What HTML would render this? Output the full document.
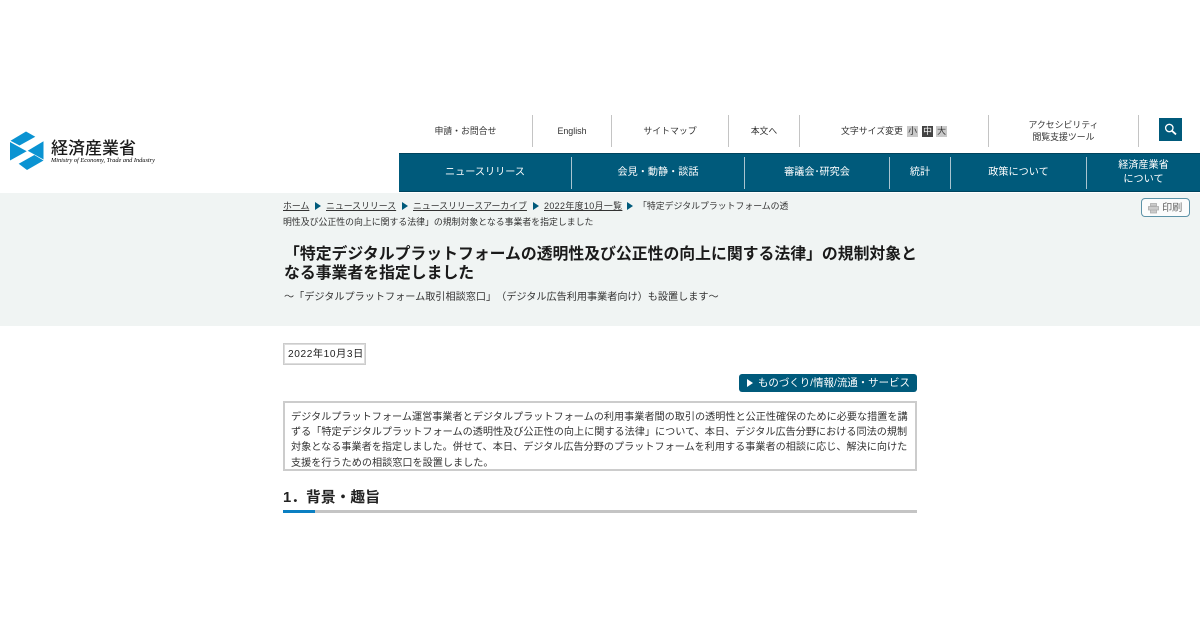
<!DOCTYPE html>
<html lang="ja"><head><meta charset="utf-8"><title>経済産業省</title>
<style>
html,body{margin:0;padding:0;background:#fff}
#p{position:relative;width:1200px;height:630px;overflow:hidden;background:#fff;font-family:"Liberation Sans","Noto Sans CJK JP",sans-serif;color:#333;text-spacing-trim:space-all}
#p div,#p span.t{position:absolute}
.t{white-space:nowrap;line-height:16px;height:16px}
.s{font-size:8.9px}
.b{font-size:10.13px}
.c{text-align:center}
.sep{width:1px;background:#c4c4c4;top:115px;height:32px}
.nsep{width:1px;background:#a9c4d0;top:157px;height:32px}
.w{color:#fff}
.tri{width:0;height:0;border-left:6.5px solid #005a7b;border-top:4px solid transparent;border-bottom:4px solid transparent;top:202px}
u{text-decoration:underline}
</style></head><body><div id="p">

<svg style="position:absolute;left:0;top:125px" width="60" height="50" viewBox="0 125 60 50">
<g fill="#0a93d2">
<polygon points="10.500,140.700 26,131.500 35.300,136.700 19.500,145.500"/>
<polygon points="10,142 26.700,151.300 10,160.500"/>
<polygon points="43.500,141.300 27.700,150.700 43.500,159.500"/>
<polygon points="18.700,163.700 34.300,155 43.500,160.500 27,170"/>
</g>
</svg>
<div class="t" style="left:51px;top:140px;font-size:17px;line-height:18px;height:18px;color:#1a1a1a;font-family:'Liberation Serif','Noto Sans CJK JP',sans-serif;font-weight:500">経済産業省</div>
<div class="t" style="left:51px;top:156px;font-size:6.300px;line-height:9px;height:9px;color:#000;font-family:'Liberation Serif',serif;font-style:italic">Ministry of Economy, Trade and Industry</div>

<div class="t s c" style="left:399px;width:133px;top:123px">申請・お問合せ</div>
<div class="sep" style="left:532px"></div>
<div class="t s c" style="left:533px;width:78px;top:123px">English</div>
<div class="sep" style="left:611px"></div>
<div class="t s c" style="left:612px;width:116px;top:123px">サイトマップ</div>
<div class="sep" style="left:728px"></div>
<div class="t s c" style="left:729px;width:70px;top:123px">本文へ</div>
<div class="sep" style="left:799px"></div>
<div class="t s" style="left:841px;top:123px">文字サイズ変更</div>
<div class="t s c" style="left:907px;top:126px;width:11px;height:11px;line-height:11px;background:#c9c9c9">小</div>
<div class="t s c" style="left:922px;top:126px;width:11px;height:11px;line-height:11px;background:#444;color:#fff">中</div>
<div class="t s c" style="left:936px;top:126px;width:11px;height:11px;line-height:11px;background:#c9c9c9">大</div>
<div class="sep" style="left:988px"></div>
<div class="t s c" style="left:989px;width:149px;top:117px">アクセシビリティ</div>
<div class="t s c" style="left:989px;width:149px;top:129px">閲覧支援ツール</div>
<div class="sep" style="left:1138px"></div>
<div style="left:1159px;top:118px;width:23px;height:23px;background:#005a7b">
<svg width="23" height="23" viewBox="0 0 23 23" fill="none" stroke="#fff"><circle cx="10.300" cy="10" r="3.700" stroke-width="1.300"/><path d="M13 12.800l4 3.600" stroke-width="1.800"/></svg>
</div>

<div style="left:399px;top:153px;width:801px;height:39px;background:#005a7b;border-top:1px solid #00445e;border-bottom:1px solid #00445e;box-sizing:border-box"></div>
<div class="t b c w" style="left:399px;width:172px;top:165px">ニュースリリース</div>
<div class="nsep" style="left:571px"></div>
<div class="t b c w" style="left:572px;width:172px;top:165px">会見・動静・談話</div>
<div class="nsep" style="left:744px"></div>
<div class="t b c w" style="left:745px;width:144px;top:165px">審議会･研究会</div>
<div class="nsep" style="left:889px"></div>
<div class="t b c w" style="left:890px;width:60px;top:165px">統計</div>
<div class="nsep" style="left:950px"></div>
<div class="t b c w" style="left:951px;width:135px;top:165px">政策について</div>
<div class="nsep" style="left:1086px"></div>
<div class="t b c w" style="left:1087px;width:113px;top:158px">経済産業省</div>
<div class="t b c w" style="left:1087px;width:113px;top:172px">について</div>

<div style="left:0;top:193px;width:1200px;height:133px;background:#f0f4f3"></div>

<div class="t s" style="left:283px;top:198px"><u>ホーム</u></div>
<div class="tri" style="left:315px"></div>
<div class="t s" style="left:326px;top:198px"><u>ニュースリリース</u></div>
<div class="tri" style="left:402px"></div>
<div class="t s" style="left:413px;top:198px"><u>ニュースリリースアーカイブ</u></div>
<div class="tri" style="left:533px"></div>
<div class="t s" style="left:544px;top:198px;letter-spacing:.4px"><u>2022年度10月一覧</u></div>
<div class="tri" style="left:627px"></div>
<div class="t s" style="left:638px;top:198px">「特定デジタルプラットフォームの透</div>
<div class="t s" style="left:283px;top:214px">明性及び公正性の向上に関する法律」の規制対象となる事業者を指定しました</div>

<div style="left:1141px;top:198px;width:49px;height:19px;box-sizing:border-box;border:1px solid #5d93a8;border-radius:4px;background:#fbfcfc"></div>
<svg style="position:absolute;left:1147px;top:202px" width="13" height="12" viewBox="0 0 13 12"><path d="M3.500 1.500h6v2.500h-6zM1.500 4.500h10v3.500h-10zM3.500 8h6v3h-6z" fill="#ccc" stroke="#aaa" stroke-width=".8"/></svg>
<div class="t s" style="left:1162px;top:201px;font-size:10.200px;color:#666">印刷</div>

<div class="t" style="left:284px;top:245px;font-size:15.850px;font-weight:700;line-height:20px;height:20px;color:#1a1a1a">「特定デジタルプラットフォームの透明性及び公正性の向上に関する法律」の規制対象と</div>
<div class="t" style="left:284px;top:264px;font-size:15.850px;font-weight:700;line-height:20px;height:20px;color:#1a1a1a">なる事業者を指定しました</div>
<div class="t b" style="left:284px;top:290px">～「デジタルプラットフォーム取引相談窓口」（デジタル広告利用事業者向け）も設置します～</div>

<div style="left:283px;top:343px;width:83px;height:22px;box-sizing:border-box;border:1px solid #ccc;box-shadow:inset 0 0 0 1px #ddd"></div>
<div class="t b" style="left:288px;top:347px;color:#222;letter-spacing:.6px">2022年10月3日</div>

<div style="left:739px;top:374px;width:178px;height:18px;background:#005a7b;border-radius:3px"></div>
<div style="left:747px;top:379px;width:0;height:0;border-left:6.500px solid #fff;border-top:4px solid transparent;border-bottom:4px solid transparent"></div>
<div class="t w" style="left:758px;top:375px;font-size:10.450px;line-height:17px">ものづくり/情報/流通・サービス</div>

<div style="left:283px;top:401px;width:634px;height:70px;box-sizing:border-box;border:2px solid #ccc;background:#fff"></div>
<div class="t b" style="left:291px;top:409.500px">デジタルプラットフォーム運営事業者とデジタルプラットフォームの利用事業者間の取引の透明性と公正性確保のために必要な措置を講</div>
<div class="t b" style="left:291px;top:424.500px">ずる「特定デジタルプラットフォームの透明性及び公正性の向上に関する法律」について、本日、デジタル広告分野における同法の規制</div>
<div class="t b" style="left:291px;top:440px">対象となる事業者を指定しました。併せて、本日、デジタル広告分野のプラットフォームを利用する事業者の相談に応じ、解決に向けた</div>
<div class="t b" style="left:291px;top:455.500px">支援を行うための相談窓口を設置しました。</div>

<div class="t" style="left:283px;top:489px;font-size:14.800px;font-weight:700;line-height:18px;height:18px;color:#222">1．背景・趣旨</div>
<div style="left:283px;top:510px;width:634px;height:3px;background:#c4c4c4"></div>
<div style="left:283px;top:510px;width:32px;height:3px;background:#0a7fc2"></div>

</div></body></html>
